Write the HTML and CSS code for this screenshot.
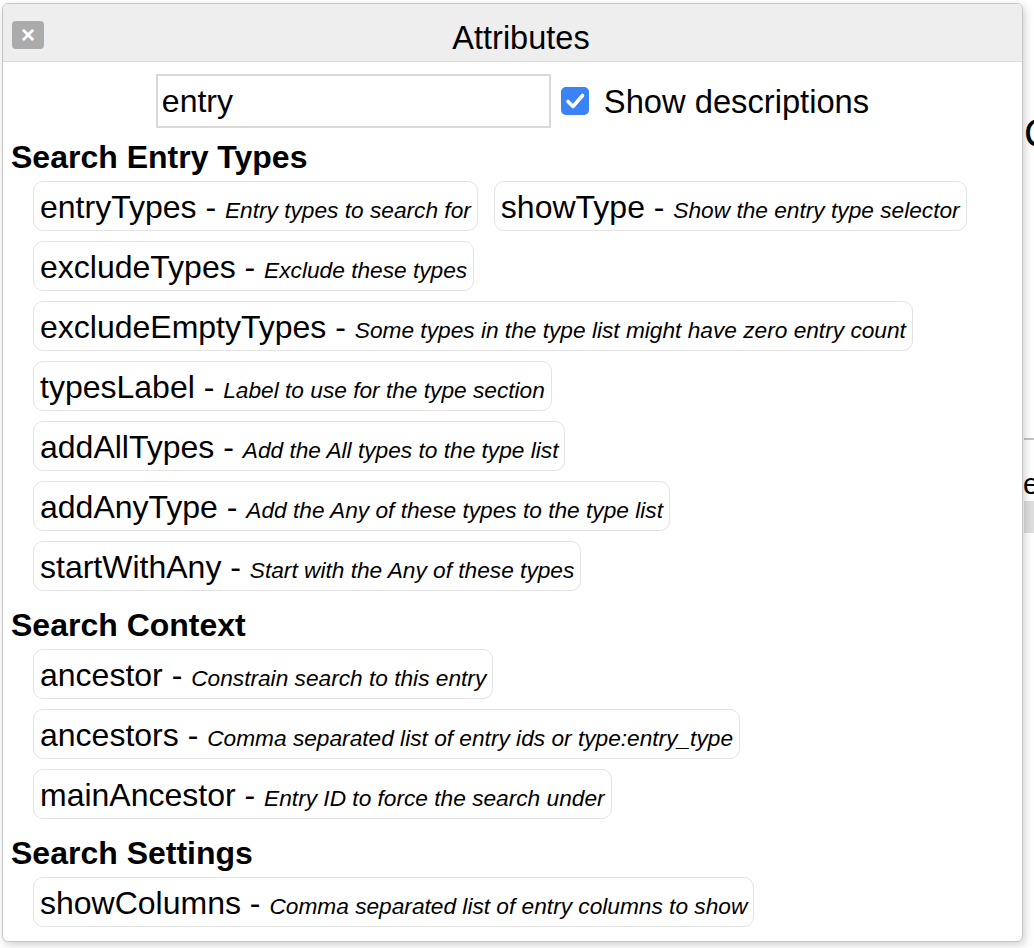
FILE: index.html
```html
<!DOCTYPE html>
<html>
<head>
<meta charset="utf-8">
<title>Attributes</title>
<link rel="stylesheet" href="styles.css">
</head>
<body>
<div class="page">
  <div class="page-title">Content</div>
  <div class="page-rule"></div>
  <div class="page-text">entry</div>
  <div class="page-band"></div>
</div>

<div class="dialog">
  <div class="dialog-header">
    <button class="close" type="button">&#215;</button>
    <div class="title">Attributes</div>
  </div>
  <div class="dialog-body">
    <div class="search-row">
      <div class="search-input">entry</div>
      <span class="check"><svg viewBox="0 0 28 28" width="28" height="28"><path d="M7 14.5 L12 19.5 L21.5 8.5" fill="none" stroke="#fff" stroke-width="3.6" stroke-linecap="round" stroke-linejoin="round"/></svg></span>
      <span class="check-label">Show descriptions</span>
    </div>

    <div class="section">
      <div class="section-title">Search Entry Types</div>
      <div class="items">
        <div class="item"><span class="name">entryTypes</span> - <i class="desc">Entry types to search for</i></div>
        <div class="item"><span class="name">showType</span> - <i class="desc">Show the entry type selector</i></div>
        <div class="item"><span class="name">excludeTypes</span> - <i class="desc">Exclude these types</i></div>
        <div class="item"><span class="name">excludeEmptyTypes</span> - <i class="desc">Some types in the type list might have zero entry count</i></div>
        <div class="item"><span class="name">typesLabel</span> - <i class="desc">Label to use for the type section</i></div>
        <div class="item"><span class="name">addAllTypes</span> - <i class="desc">Add the All types to the type list</i></div>
        <div class="item"><span class="name">addAnyType</span> - <i class="desc">Add the Any of these types to the type list</i></div>
        <div class="item"><span class="name">startWithAny</span> - <i class="desc">Start with the Any of these types</i></div>
      </div>
    </div>

    <div class="section">
      <div class="section-title">Search Context</div>
      <div class="items">
        <div class="item"><span class="name">ancestor</span> - <i class="desc">Constrain search to this entry</i></div>
        <div class="item"><span class="name">ancestors</span> - <i class="desc">Comma separated list of entry ids or type:entry_type</i></div>
        <div class="item"><span class="name">mainAncestor</span> - <i class="desc">Entry ID to force the search under</i></div>
      </div>
    </div>

    <div class="section">
      <div class="section-title">Search Settings</div>
      <div class="items">
        <div class="item"><span class="name">showColumns</span> - <i class="desc">Comma separated list of entry columns to show</i></div>
      </div>
    </div>
  </div>
</div>
</body>
</html>
```

FILE: styles.css
```css
html, body {
  margin: 0;
  padding: 0;
}

body {
  width: 1034px;
  height: 948px;
  overflow: hidden;
  background: #ffffff;
  font-family: "Liberation Sans", Arial, Helvetica, sans-serif;
  color: #000;
  position: relative;
}

/* underlying page, mostly hidden behind the dialog */
.page {
  padding: 110px 0 0 1024px;
  white-space: nowrap;
}

.page-title {
  font-size: 40px;
  line-height: 46px;
}

.page-rule {
  margin-top: 282px;
  height: 2px;
  background: #c2c2c2;
}

.page-text {
  margin-top: 28px;
  margin-left: -1px;
  font-size: 29px;
  line-height: 33px;
}

.page-band {
  height: 32px;
  background: #dedede;
}

/* dialog */
.dialog {
  position: absolute;
  left: 2px;
  top: 3px;
  width: 1021px;
  height: 939px;
  box-sizing: border-box;
  border: 1px solid #c6c6c6;
  border-radius: 6px;
  background: #ffffff;
  box-shadow: 2px 3px 9px rgba(0, 0, 0, 0.18);
  overflow: hidden;
}

.dialog-header {
  display: flex;
  align-items: flex-start;
  height: 58px;
  box-sizing: border-box;
  padding: 16px 9px 0;
  background: #eeeeee;
  border-bottom: 1px solid #dcdcdc;
}

.close {
  flex: none;
  width: 32px;
  height: 28px;
  margin-top: 1px;
  padding: 0;
  border: 0;
  border-radius: 4px;
  background: #ababab;
  color: #ffffff;
  font-family: "Liberation Sans", Arial, sans-serif;
  font-weight: bold;
  font-size: 24px;
  line-height: 28px;
}

.title {
  flex: 1;
  margin-right: 15px;
  text-align: center;
  font-size: 32.5px;
  line-height: 37px;
}

.dialog-body {
  padding: 12px 8px 12px;
}

.search-row {
  display: flex;
  justify-content: center;
  align-items: center;
}

.search-input {
  width: 395px;
  height: 54px;
  box-sizing: border-box;
  border: 2px solid #d9d9d9;
  padding: 0 4px;
  font-size: 32px;
  line-height: 51px;
}

.check {
  flex: none;
  display: flex;
  width: 28px;
  height: 28px;
  margin-left: 10px;
  border-radius: 5px;
  background: #3a82f6;
}

.check-label {
  margin-left: 15px;
  font-size: 32.7px;
  line-height: 37px;
}

.section {
  margin-top: 16px;
}

.search-row + .section {
  margin-top: 11px;
}

.section-title {
  font-size: 32px;
  font-weight: bold;
  line-height: 37px;
}

.items {
  display: flex;
  flex-wrap: wrap;
  gap: 10px 16px;
  margin-top: 5px;
  padding-left: 22px;
}

.item {
  border: 1px solid #e3e3e3;
  border-radius: 10px;
  padding: 7px 6px 5px;
  font-size: 32px;
  line-height: 36px;
  white-space: nowrap;
}

.desc {
  font-size: 22.7px;
  font-style: italic;
  line-height: 1;
}
```
